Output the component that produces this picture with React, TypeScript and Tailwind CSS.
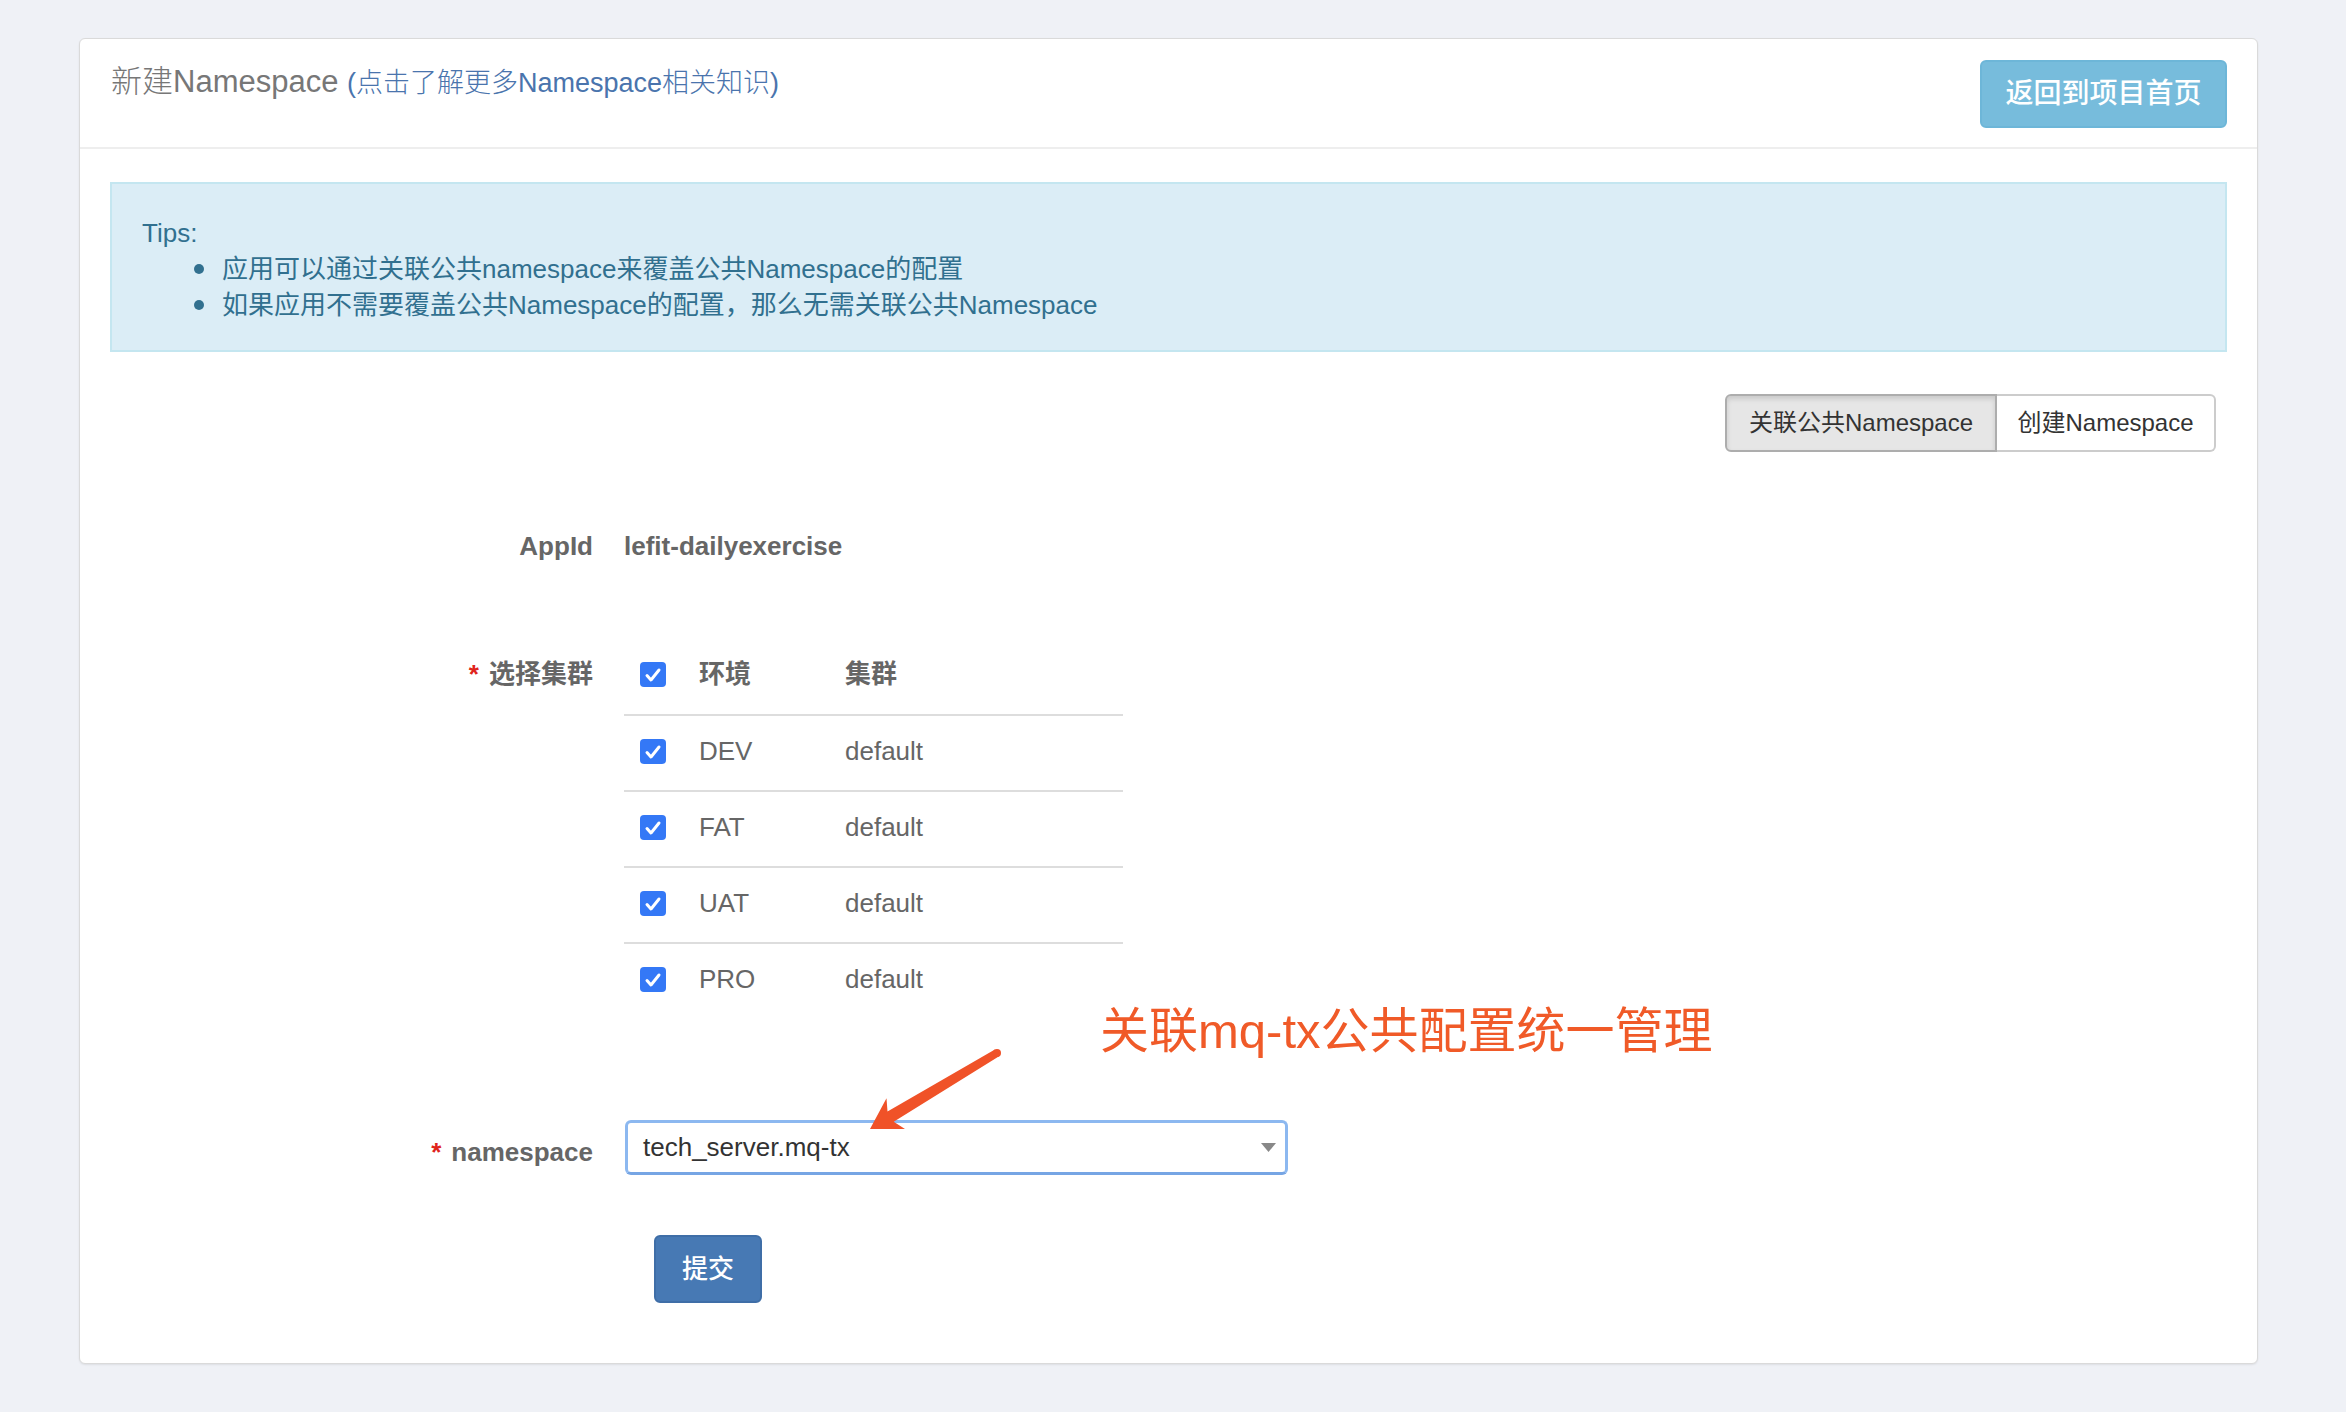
import React from "react";

const font = "font-['Liberation_Sans','Noto_Sans_CJK_SC',sans-serif]";

function Check() {
  return (
    <div className="w-[26px] h-[25px] rounded-[4px] bg-[#3478f6] flex items-center justify-center shrink-0">
      <svg width="18" height="16" viewBox="0 0 18 16">
        <path d="M3 8.5 L7 13 L15 3" fill="none" stroke="#ffffff" strokeWidth="3" strokeLinecap="round" strokeLinejoin="round" />
      </svg>
    </div>
  );
}

function Row({ a, b, head, first }: { a: string; b: string; head?: boolean; first?: boolean }) {
  return (
    <div className={`flex items-center h-[76px] pb-[3px] ${first ? "" : "border-t-2 border-[#dddddd]"}`}>
      <div className="ml-[16px]">
        <Check />
      </div>
      <span className={`ml-[33px] w-[146px] text-[26px] leading-[37px] text-[#666666] ${head ? "font-semibold" : ""}`}>{a}</span>
      <span className={`text-[26px] leading-[37px] text-[#666666] ${head ? "font-semibold" : ""}`}>{b}</span>
    </div>
  );
}

export default function App() {
  return (
    <div className={`relative min-h-[1412px] bg-[#eff1f6] pt-[38px] pl-[79px] ${font}`}>
      <div className="w-[2179px] bg-white border border-[#dadada] rounded-[6px] shadow-[0_1px_2px_rgba(0,0,0,0.08)]">
        {/* header */}
        <div className="h-[110px] border-b-2 border-[#eeeeee] flex items-start justify-between pt-[21px] pl-[31px] pr-[30px]">
          <div className="leading-[44px] whitespace-nowrap">
            <span className="text-[31px] text-[#777777] font-light">新建Namespace </span>
            <span className="text-[27px] text-[#4a74ad] font-light">(点击了解更多Namespace相关知识)</span>
          </div>
          <button className="w-[247px] h-[68px] bg-[#77bcdc] border-2 border-[#6db6d8] rounded-[6px] text-white text-[28px] font-medium">
            返回到项目首页
          </button>
        </div>

        {/* body */}
        <div className="px-[30px] pt-[33px] pb-[60px]">
          <div className="border-2 border-[#c4e6f0] bg-[#dbedf6] pt-[31px] pb-[27px] pl-[30px] text-[#31708f] text-[26px] leading-[36px]">
            <div className="font-medium">Tips:</div>
            <div className="flex items-center">
              <span className="ml-[52px] w-[10px] h-[10px] rounded-full bg-[#31708f]" />
              <span className="ml-[18px]">应用可以通过关联公共namespace来覆盖公共Namespace的配置</span>
            </div>
            <div className="flex items-center">
              <span className="ml-[52px] w-[10px] h-[10px] rounded-full bg-[#31708f]" />
              <span className="ml-[18px]">如果应用不需要覆盖公共Namespace的配置，那么无需关联公共Namespace</span>
            </div>
          </div>

          <div className="flex justify-end mt-[42px] mr-[11px]">
            <div className="flex h-[58px] text-[24px] text-[#333333]">
              <button className="w-[272px] h-full bg-[#e6e6e6] border-2 border-[#adadad] rounded-l-[6px] shadow-[inset_0_3px_5px_rgba(0,0,0,0.125)]">
                关联公共Namespace
              </button>
              <button className="w-[219px] h-full bg-white border-2 border-l-0 border-[#cccccc] rounded-r-[6px]">
                创建Namespace
              </button>
            </div>
          </div>

          <div className="grid grid-cols-[483px_1fr] gap-x-[31px] mt-[76px]">
            {/* AppId */}
            <div className="text-right text-[26px] leading-[37px] font-bold text-[#666666]">AppId</div>
            <div className="text-[26px] leading-[37px] font-bold text-[#666666]">lefit-dailyexercise</div>

            {/* cluster */}
            <div className="mt-[73px] pt-[18px] text-right text-[26px] leading-[37px] font-bold text-[#666666]">
              <span className="text-[#e0241b] mr-[10px]">*</span>选择集群
            </div>
            <div className="mt-[73px] w-[499px]">
              <Row a="环境" b="集群" head first />
              <Row a="DEV" b="default" />
              <Row a="FAT" b="default" />
              <Row a="UAT" b="default" />
              <Row a="PRO" b="default" />
            </div>

            {/* namespace */}
            <div className="mt-[102px] pt-[14px] text-right text-[26px] leading-[37px] font-bold text-[#666666]">
              <span className="text-[#e0241b] mr-[10px]">*</span>namespace
            </div>
            <div className="mt-[102px]">
              <div className="ml-[1px] w-[663px] h-[55px] border-[3px] border-[#8cb8f0] border-b-[#76a5e4] rounded-[6px] flex items-center justify-between pl-[15px] pr-[9px]">
                <span className="text-[26px] text-[#333333]">tech_server.mq-tx</span>
                <svg width="15" height="9" viewBox="0 0 15 9">
                  <polygon points="0,0 15,0 7.5,9" fill="#888888" />
                </svg>
              </div>
            </div>

            {/* submit */}
            <div />
            <div className="mt-[60px]">
              <button className="ml-[30px] w-[108px] h-[68px] bg-[#4779b4] border-2 border-[#3f6ea7] rounded-[6px] text-white text-[26px] font-medium">
                提交
              </button>
            </div>
          </div>
        </div>
      </div>

      {/* annotation overlay */}
      <div className="absolute left-[1100px] top-[1007px] text-[49px] leading-[49px] text-[#f05a28] whitespace-nowrap">
        关联mq-tx公共配置统一管理
      </div>
      <svg className="absolute left-0 top-0 pointer-events-none" width="2346" height="1412" viewBox="0 0 2346 1412">
        <polygon
          points="870,1129 905,1129 893.7,1121.8 999.1,1056.3 994.9,1049.5 887.5,1111.6 886.5,1098.2"
          fill="#f05228"
        />
        <circle cx="997" cy="1053" r="4" fill="#f05228" />
      </svg>
    </div>
  );
}
